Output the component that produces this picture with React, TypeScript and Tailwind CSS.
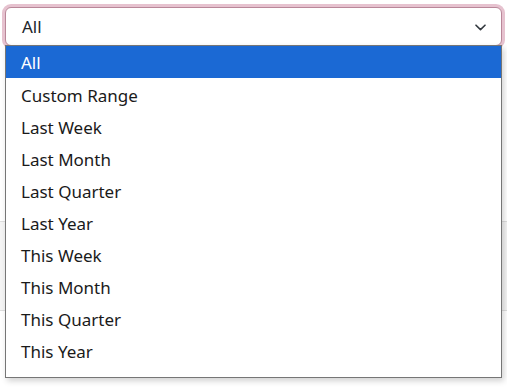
import React from "react";

const options = [
  "All",
  "Custom Range",
  "Last Week",
  "Last Month",
  "Last Quarter",
  "Last Year",
  "This Week",
  "This Month",
  "This Quarter",
  "This Year",
];

export default function App() {
  return (
    <div
      className="relative w-[507px] h-[388px] overflow-hidden bg-white"
      style={{ fontFamily: '"Noto Sans", "Open Sans", sans-serif' }}
    >
      {/* background content */}
      <div className="flex flex-col">
        <div className="px-[5px] pt-[7px]">
          <div className="h-[39px] rounded-[6px] border border-[#b98799] bg-white ring-[3px] ring-[#e6c2cf] flex items-center justify-between pl-[16px] pr-[15px] pt-[1px] text-[17px] text-[#212529]">
            <span>All</span>
            <svg width="11" height="7" viewBox="0 0 11 7" fill="none">
              <path d="M1 1.2 L5.5 5.6 L10 1.2" stroke="#343a40" strokeWidth="1.6" strokeLinecap="round" strokeLinejoin="round" />
            </svg>
          </div>
        </div>
        <div className="h-[175px]" />
        <div className="h-[90px] bg-[#f4f4f4] border-y border-[#dedede]" />
      </div>

      {/* dropdown list */}
      <div className="absolute left-[5px] top-[45px] w-[497px] h-[333px] bg-white border border-[#767676] shadow-[2px_3px_6px_rgba(0,0,0,0.18)] flex flex-col text-[17px] text-[#1a1a1a]">
        {options.map((o, i) => (
          <div
            key={o}
            className={
              i === 0
                ? "h-[32px] flex items-center pl-[15px] pt-[2px] bg-[#1b69d4] text-white"
                : "h-[32px] flex items-center pl-[15px] pt-[3px]"
            }
          >
            {o}
          </div>
        ))}
      </div>
    </div>
  );
}
